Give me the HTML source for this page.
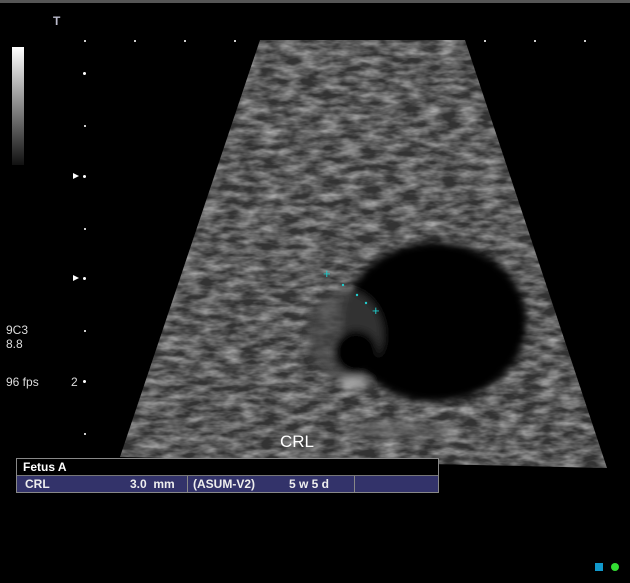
<!DOCTYPE html>
<html><head><style>
body{margin:0;width:630px;height:583px;background:#000;overflow:hidden;position:relative;font-family:"Liberation Sans",sans-serif}
.t{position:absolute;color:#ddd;font-size:12px}
.d{position:absolute;width:3px;height:3px;background:#fff;border-radius:50%}
.s{position:absolute;width:2px;height:2px;background:#ccc;top:40px}
</style></head><body>
<div style="position:absolute;left:0;top:0;width:630px;height:3px;background:#555"></div>
<svg width="630" height="583" style="position:absolute;left:0;top:0">
<defs>
<filter id="n" x="0" y="0" width="100%" height="100%">
<feTurbulence type="fractalNoise" baseFrequency="0.05 0.14" numOctaves="3" seed="4"/>
<feColorMatrix values="0 0 0 0 0.5  0 0 0 0 0.5  0 0 0 0 0.5  0 0 0 1.4 -0.4"/>
</filter>
<filter id="b"><feGaussianBlur stdDeviation="4"/></filter>
<clipPath id="c"><polygon points="260,40 465,40 607,468 120,457"/></clipPath>
<linearGradient id="s" x1="0" y1="0" x2="0" y2="1"><stop offset="0" stop-color="#fff"/><stop offset="1" stop-color="#111"/></linearGradient>
</defs>
<g clip-path="url(#c)">
<rect x="100" y="40" width="520" height="440" fill="#333"/>
<rect x="100" y="40" width="520" height="440" filter="url(#n)"/>
<g filter="url(#b)">
<ellipse cx="435" cy="322" rx="92" ry="80" fill="#000"/>
<ellipse cx="345" cy="335" rx="38" ry="45" fill="#444" opacity="0.7"/>
<ellipse cx="356" cy="352" rx="22" ry="22" fill="#000"/>
<ellipse cx="355" cy="383" rx="15" ry="5" fill="#aaa"/>
<ellipse cx="400" cy="430" rx="60" ry="8" fill="#666" opacity="0.5"/>
</g>
</g>
<rect x="12" y="47" width="12" height="118" fill="url(#s)"/>
<g fill="#2cc" font-size="13"><text x="323" y="278">+</text><text x="372" y="315">+</text></g>
<g fill="#2cc"><circle cx="343" cy="285" r="1.2"/><circle cx="357" cy="295" r="1.2"/><circle cx="366" cy="303" r="1.2"/></g>
<polygon points="73,173 79,176 73,179" fill="#fff"/><polygon points="73,275 79,278 73,281" fill="#fff"/>
</svg>
<div class="t" style="left:53px;top:14px;font-weight:bold;color:#bbc">T</div>
<div class="s" style="left:84px"></div><div class="s" style="left:134px"></div><div class="s" style="left:184px"></div><div class="s" style="left:234px"></div><div class="s" style="left:484px"></div><div class="s" style="left:534px"></div><div class="s" style="left:584px"></div>
<div class="s" style="left:84px;top:125px"></div><div class="s" style="left:84px;top:228px"></div><div class="s" style="left:84px;top:330px"></div><div class="s" style="left:84px;top:433px"></div>
<div class="d" style="left:83px;top:72px"></div><div class="d" style="left:83px;top:175px"></div><div class="d" style="left:83px;top:277px"></div><div class="d" style="left:83px;top:380px"></div>
<div class="t" style="left:6px;top:323px">9C3<br>8.8</div>
<div class="t" style="left:6px;top:375px">96 fps</div>
<div class="t" style="left:71px;top:375px">2</div>
<div style="position:absolute;left:280px;top:432px;color:#fff;font-size:17px">CRL</div>
<div style="position:absolute;left:16px;top:458px;width:421px;height:33px;border:1px solid #888;background:#000">
<div style="color:#fff;font-size:12px;font-weight:bold;padding:1px 6px;height:14px">Fetus A</div>
<div style="background:#33336a;height:16px;border-top:1px solid #777;color:#eee;font-size:12px;font-weight:bold;position:relative">
<span style="position:absolute;left:8px;top:1px">CRL</span>
<span style="position:absolute;left:113px;top:1px">3.0 &nbsp;mm</span>
<span style="position:absolute;left:170px;top:0;width:1px;height:16px;background:#888"></span>
<span style="position:absolute;left:176px;top:1px">(ASUM-V2)</span>
<span style="position:absolute;left:272px;top:1px">5 w 5 d</span>
<span style="position:absolute;left:337px;top:0;width:1px;height:16px;background:#888"></span>
</div></div>
<div style="position:absolute;left:595px;top:563px;width:8px;height:8px;background:#19c"></div>
<div style="position:absolute;left:611px;top:563px;width:8px;height:8px;background:#3d3;border-radius:50%"></div>
</body></html>
